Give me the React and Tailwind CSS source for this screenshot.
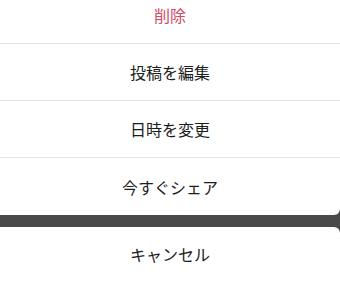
import React from "react";

const font = { fontFamily: '"Noto Sans CJK JP", "Noto Sans", sans-serif' };

function Row({ children, red, last }) {
  return (
    <div
      className={
        "flex h-[57px] items-center justify-center text-[16px] " +
        (red ? "text-[#cf4a67] " : "text-[#1c1c1c] ") +
        (last ? "" : "border-b border-[#e3e3e3]")
      }
    >
      {children}
    </div>
  );
}

export default function App() {
  return (
    <div className="flex h-[284px] w-[340px] flex-col overflow-hidden bg-[#4a4a4a]" style={font}>
      <div className="mt-[-13px] w-full shrink-0 rounded-br-[6px] bg-white">
        <Row red>削除</Row>
        <Row>投稿を編集</Row>
        <Row>日時を変更</Row>
        <Row last>今すぐシェア</Row>
      </div>
      <div className="mt-[12px] flex w-full flex-1 flex-col rounded-tr-[6px] bg-white">
        <div className="flex h-[54px] items-center justify-center text-[16px] text-[#1c1c1c]">
          キャンセル
        </div>
      </div>
    </div>
  );
}
